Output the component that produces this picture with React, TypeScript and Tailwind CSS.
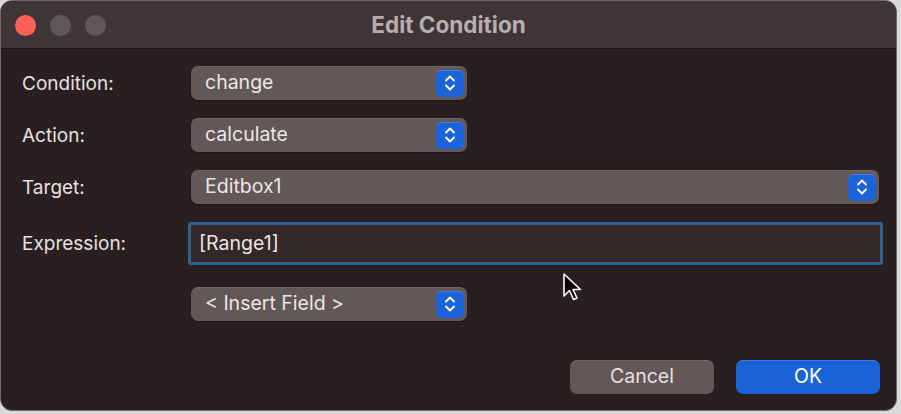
import React from 'react';

const font = { fontFamily: 'Inter, "Liberation Sans", sans-serif' };

function Stepper() {
  return (
    <div className="flex h-[27px] w-[28px] items-center justify-center rounded-[5px] bg-[#1c63d9] shadow-[inset_0_1px_0_rgba(255,255,255,0.18)]">
      <svg width="12" height="20" viewBox="0 0 12 20" fill="none" stroke="#ffffff" strokeWidth="1.8" strokeLinecap="round" strokeLinejoin="round">
        <path d="M2 7.5 L6 3.5 L10 7.5" />
        <path d="M2 12.5 L6 16.5 L10 12.5" />
      </svg>
    </div>
  );
}

function Popup({ value, wide }: { value: string; wide?: boolean }) {
  return (
    <div
      className={`flex h-[34px] items-center justify-between rounded-[7px] bg-[#625858] pl-[14px] pr-[3px] shadow-[inset_0_1px_0_rgba(255,255,255,0.08),0_1px_1px_rgba(0,0,0,0.35)] ${
        wide ? 'w-[688px]' : 'w-[276px]'
      }`}
    >
      <span className="text-[19.5px] leading-none text-[#ebe5e5]">{value}</span>
      <Stepper />
    </div>
  );
}

function Row({ label, children, className }: { label?: string; children: React.ReactNode; className?: string }) {
  return (
    <div className={`flex items-center ${className ?? ''}`}>
      <div className="w-[169px] shrink-0 text-[19px] leading-none text-[#e6e0e0]">{label}</div>
      {children}
    </div>
  );
}

export default function App() {
  return (
    <div className="relative h-[414px] w-[901px] bg-[#d9d9d9]" style={font}>
      <div className="flex h-[411px] w-[897px] flex-col overflow-hidden rounded-[12px] border border-[#716869] bg-[#2a1f20]">
        {/* title bar */}
        <div className="relative flex h-[48px] shrink-0 items-center justify-center border-b border-[#161112] bg-[#3e3536]">
          <div className="absolute left-[14px] top-[14px] flex gap-[14px]">
            <span className="h-[21px] w-[21px] rounded-full bg-[#fe5f57]" />
            <span className="h-[21px] w-[21px] rounded-full bg-[#5f5657]" />
            <span className="h-[21px] w-[21px] rounded-full bg-[#5f5657]" />
          </div>
          <span className="text-[22.5px] font-bold text-[#b7aeaf]">Edit Condition</span>
        </div>

        {/* body */}
        <div className="flex flex-col pl-[21px] pt-[17px]">
          <Row label="Condition:">
            <Popup value="change" />
          </Row>
          <Row label="Action:" className="mt-[18px]">
            <Popup value="calculate" />
          </Row>
          <Row label="Target:" className="mt-[18px]">
            <Popup value="Editbox1" wide />
          </Row>
          <Row label="Expression:" className="mt-[18px]">
            <div className="-ml-[3px] flex h-[43px] w-[695px] items-center rounded-[3px] border-[3px] border-[#2f6290] bg-[#332728] px-[8px]">
              <span className="text-[19.5px] leading-none text-[#ebe5e5]">[Range1]</span>
            </div>
          </Row>
          <Row className="mt-[22px]">
            <Popup value="< Insert Field >" />
          </Row>
          <div className="mt-[39px] flex gap-[22px] pl-[548px]">
            <button className="h-[34px] w-[144px] rounded-[7px] bg-[#625858] text-[19.5px] text-[#e6e0e0] shadow-[inset_0_1px_0_rgba(255,255,255,0.08)]">
              Cancel
            </button>
            <button className="h-[34px] w-[144px] rounded-[7px] bg-[#1b62d9] text-[19.5px] text-white shadow-[inset_0_1px_0_rgba(255,255,255,0.15)]">
              OK
            </button>
          </div>
        </div>
      </div>

      {/* mouse pointer */}
      <svg className="absolute left-[562px] top-[272px]" width="22" height="30" viewBox="0 0 22 30">
        <path d="M2 2 L2 24 L7.5 18.5 L11.5 27.5 L15 26 L11 17.5 L18.5 17.5 Z" fill="#000000" stroke="#ffffff" strokeWidth="1.6" strokeLinejoin="round" />
      </svg>
    </div>
  );
}
